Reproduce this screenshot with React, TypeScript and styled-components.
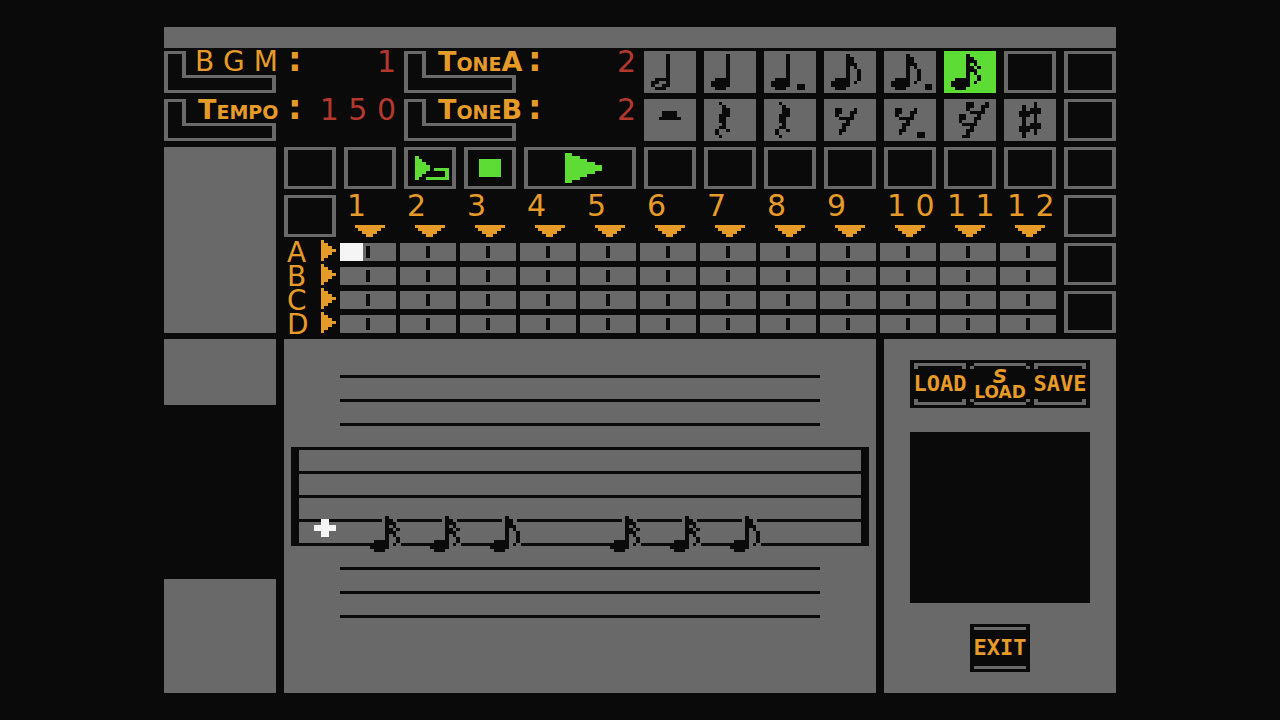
import React from "react";
import styled, { createGlobalStyle } from "styled-components";

const color = {
  ink: "#0a0a0a",
  panel: "#696969",
  amber: "#e69b28",
  red: "#b4382e",
  green: "#5cdc34",
  white: "#f5f5f5",
};

const GlobalStyle = createGlobalStyle`
  *, *::before, *::after { box-sizing: border-box; }
  body {
    margin: 0;
    background: ${color.ink};
    color: ${color.amber};
    font-family: "DejaVu Sans", sans-serif;
  }
  button {
    margin: 0;
    padding: 0;
    border: 0;
    border-radius: 0;
    font: inherit;
    color: inherit;
    cursor: pointer;
  }
`;

/* ---------- sprites ---------- */

// Each entry is [row, firstColumn, lastColumn] on a grid of wide pixels.
type Run = [number, number, number];

const px = (column: number) => Math.floor(column * 3.75);

const column = (c: number, from: number, to: number): Run[] =>
  Array.from({ length: to - from + 1 }, (_, i): Run => [from + i, c, c]);

const head: Run[] = [[9, 3, 5], [10, 2, 5], [11, 2, 5], [12, 3, 5]];
const stem = column(6, 1, 11);
const flag: Run[] = [[2, 7, 7], [3, 7, 7], [4, 7, 8], [5, 8, 8], ...column(9, 6, 9), [10, 8, 8]];
const doubleFlag: Run[] = [
  [2, 7, 7], [3, 7, 8], [4, 8, 8], [5, 7, 7], [5, 9, 9],
  [6, 7, 8], [7, 8, 8], [8, 9, 9], [9, 9, 9], [10, 8, 8],
];
const quarterRest: Run[] = [
  [1, 4, 4], [2, 5, 5], [3, 5, 6], [4, 5, 6], [5, 4, 6], [6, 4, 5],
  [7, 4, 5], [8, 5, 5], [9, 4, 5], [10, 3, 3], [10, 6, 6], [11, 3, 3], [12, 4, 4],
];
const eighthRest: Run[] = [
  [3, 3, 4], [3, 8, 8], [4, 3, 4], [4, 7, 8], [5, 3, 3], [5, 7, 7],
  [6, 4, 7], [7, 6, 6], [8, 5, 6], [9, 5, 5], [10, 4, 5], [11, 4, 4],
];

const sprites: Record<string, Run[]> = {
  half: [...stem, [9, 3, 5], [10, 2, 3], [11, 2, 2], [11, 5, 5], [12, 3, 5]],
  quarter: [...stem, ...head],
  dottedQuarter: [...stem, ...head, [11, 9, 10], [12, 9, 10]],
  eighth: [...stem, ...head, ...flag],
  dottedEighth: [...stem, ...head, ...flag, [11, 11, 12], [12, 11, 12]],
  sixteenth: [...stem, ...head, ...doubleFlag],
  halfRest: [[4, 5, 8], [5, 5, 8], [6, 4, 9]],
  quarterRest,
  eighthRest,
  dottedEighthRest: [...eighthRest, [11, 9, 10], [12, 9, 10]],
  sixteenthRest: [
    [1, 6, 7], [1, 11, 11], [2, 6, 7], [2, 10, 11], [3, 6, 6], [3, 10, 10],
    [4, 7, 10], [5, 4, 5], [5, 9, 9], [6, 4, 5], [6, 8, 9], [7, 4, 4], [7, 8, 8],
    [8, 5, 8], [9, 7, 7], [10, 6, 7], [11, 6, 6], [12, 5, 6],
  ],
  sharp: [
    ...column(5, 2, 12), ...column(8, 1, 11),
    [3, 7, 9], [4, 4, 9], [5, 4, 6], [8, 7, 9], [9, 4, 9], [10, 4, 6],
  ],
  loop: [
    [3, 3, 3], [4, 3, 4], [5, 3, 5], [6, 3, 6], [7, 3, 6], [8, 3, 5], [9, 3, 4], [10, 3, 3],
    [7, 8, 11], [8, 11, 11], [9, 11, 11], [10, 6, 11],
  ],
  stop: [4, 5, 6, 7, 8, 9].map((r): Run => [r, 4, 9]),
  play: [2, 4, 6, 8, 10, 10, 8, 6, 4, 2].map((w, i): Run => [i + 2, 11, 10 + w]),
  down: [[0, 0, 7], [1, 1, 6], [2, 2, 5], [3, 3, 4]],
  right: [1, 2, 3, 4, 3, 2, 1].map((w, i): Run => [i, 0, w - 1]),
  cross: [[0, 2, 3], [1, 2, 3], [2, 0, 5], [3, 0, 5], [4, 2, 3], [5, 2, 3]],
};

const Drawing = styled.svg`
  display: block;
  flex: none;
  fill: currentColor;
  shape-rendering: crispEdges;
`;

function Sprite({ name, width = 52, height = 42 }: { name: string; width?: number; height?: number }) {
  return (
    <Drawing width={width} height={height} viewBox={`0 0 ${width} ${height}`} aria-hidden="true">
      {sprites[name].map(([r, a, b], i) => (
        <rect key={i} x={px(a)} y={r * 3} width={px(b + 1) - px(a)} height={3} />
      ))}
    </Drawing>
  );
}

/* ---------- layout ---------- */

const Editor = styled.main`
  width: min(952px, 100% - 32px);
  margin: 0 auto;
  padding: 27px 0;
`;

const TitleBar = styled.header`
  height: 21px;
  margin-bottom: 3px;
  background: ${color.panel};
`;

const Console = styled.section`
  display: grid;
  grid-template-columns: repeat(16, minmax(0, 1fr));
  grid-auto-rows: 42px;
  gap: 6px 8px;
`;

const Slab = styled.div`
  grid-column: span 2;
  grid-row: 3 / span 4;
  background: ${color.panel};
`;

const Field = styled.label`
  grid-column: span 4;
  display: grid;
  grid-template-columns: 124px 1fr;
  & > * { grid-row: 1; }
`;

const FieldFrame = styled(Drawing)`
  grid-column: 1;
  color: ${color.panel};
`;

const FieldName = styled.span<{ $caps?: boolean }>`
  grid-column: 1;
  padding-left: ${(p) => (p.$caps ? 34 : 31)}px;
  font-size: ${(p) => (p.$caps ? 27 : 28)}px;
  font-weight: ${(p) => (p.$caps ? "bold" : "normal")};
  font-variant: ${(p) => (p.$caps ? "small-caps" : "normal")};
  line-height: 22px;
  white-space: nowrap;
`;

const Reading = styled.span`
  grid-column: 2;
  display: flex;
  justify-content: space-between;
  line-height: 22px;
`;

const Colon = styled.span`
  font-size: 34px;
  font-weight: bold;
  line-height: 16px;
`;

const Value = styled.output`
  color: ${color.red};
  font-size: 30px;
  white-space: nowrap;
`;

const NoteButton = styled.button<{ $active?: boolean }>`
  display: flex;
  justify-content: center;
  background: ${(p) => (p.$active ? color.green : color.panel)};
  color: ${color.ink};
`;

const FrameButton = styled.button<{ $span?: number; $column?: number }>`
  display: flex;
  align-items: center;
  justify-content: center;
  grid-column: ${(p) => (p.$column ? `${p.$column} / ` : "")}span ${(p) => p.$span ?? 1};
  border: solid ${color.panel};
  border-width: 3px 4px;
  background: ${color.ink};
  color: ${color.green};
`;

const Measure = styled.div`
  display: flex;
  flex-direction: column;
  justify-content: space-between;
  align-items: center;
`;

const MeasureNumber = styled.span`
  align-self: stretch;
  padding-left: 3px;
  font-size: 30px;
  line-height: 22px;
  white-space: nowrap;
`;

const Tracks = styled.div`
  grid-column: 3 / span 13;
  grid-row: 5 / span 2;
  display: grid;
  grid-auto-rows: 18px;
  gap: 6px;
`;

const Track = styled.div`
  display: grid;
  grid-template-columns: 52px repeat(12, minmax(0, 1fr));
  gap: 4px;
`;

const TrackName = styled.span`
  display: flex;
  justify-content: space-between;
  align-items: flex-end;
  height: 18px;
  padding-left: 3px;
  font-size: 28px;
  line-height: 16px;
`;

const Beat = styled.button<{ $current?: boolean }>`
  display: grid;
  place-items: center;
  background: ${(p) =>
    p.$current
      ? `linear-gradient(to right, ${color.white} 23px, ${color.panel} 23px)`
      : color.panel};
  &::after {
    content: "";
    width: 4px;
    height: 12px;
    background: ${color.ink};
  }
`;

const Workspace = styled.section`
  display: grid;
  grid-template-columns: minmax(0, 112fr) minmax(0, 592fr) minmax(0, 232fr);
  gap: 8px;
  min-height: 354px;
  margin-top: 6px;
`;

const SideColumn = styled.div`
  display: flex;
  flex-direction: column;
  justify-content: space-between;
`;

const SideBlock = styled.div<{ $height: number }>`
  height: ${(p) => p.$height}px;
  background: ${color.panel};
`;

const Score = styled.div`
  display: flex;
  flex-direction: column;
  gap: 21px;
  padding: 36px 7px;
  background: ${color.panel};
`;

const Lines = styled.div`
  display: flex;
  flex-direction: column;
  gap: 21px;
`;

const LedgerLines = styled(Lines)`
  margin: 0 49px;
`;

const StaffLine = styled.div`
  height: 3px;
  background: ${color.ink};
`;

const Staff = styled(Lines)`
  position: relative;
  border: solid ${color.ink};
  border-width: 0 8px;
`;

const Placed = styled.div<{ $x: number; $y: number }>`
  position: absolute;
  left: ${(p) => p.$x}px;
  top: ${(p) => p.$y}px;
  color: ${color.ink};
`;

const NoteBackdrop = styled(Drawing)`
  position: absolute;
  inset: 0;
  z-index: -1;
  color: ${color.panel};
`;

const PlacedNote = styled(Placed)`
  z-index: 1;
`;

const Cursor = styled(Placed)`
  color: ${color.white};
`;

const Files = styled.aside`
  display: flex;
  flex-direction: column;
  align-items: center;
  padding: 21px 26px;
  background: ${color.panel};
`;

const FileBar = styled.div`
  display: flex;
  justify-content: center;
  width: 100%;
  background: ${color.ink};
`;

const FileButton = styled.button`
  display: grid;
  grid-template-columns: 60px;
  place-items: center;
  height: 48px;
  background: ${color.ink};
  & > * { grid-area: 1 / 1; }
`;

const Bracket = styled(Drawing)`
  color: ${color.panel};
`;

const ActionName = styled.span`
  font-family: "DejaVu Sans Mono", monospace;
  font-size: 22px;
  font-weight: bold;
  line-height: 24px;
`;

const Stacked = styled.span`
  display: flex;
  flex-direction: column;
  align-items: center;
  font-size: 17px;
  font-weight: bold;
  line-height: 16px;
`;

const Slanted = styled.em`
  font-size: 20px;
`;

const FileList = styled.div`
  width: 100%;
  height: 171px;
  margin: 24px 0 21px;
  background: ${color.ink};
`;

/* ---------- parts ---------- */

function Setting({ name, value, caps }: { name: string; value: string; caps?: boolean }) {
  return (
    <Field>
      <FieldFrame width={112} height={42} viewBox="0 0 112 42" aria-hidden="true">
        <path
          fillRule="evenodd"
          d="M0 0H22V24H112V42H0ZM4 3V39H108V27H18V3Z"
        />
      </FieldFrame>
      <FieldName $caps={caps}>{name}</FieldName>
      <Reading>
        <Colon>:</Colon>
        <Value>{value}</Value>
      </Reading>
    </Field>
  );
}

type Corner = "in" | "out" | "none";

const brackets: Record<Corner, string> = {
  in: "M4 3H56V9H52V6H8V9H4ZM4 45H56V39H52V42H8V39H4Z",
  out: "M4 3H56V6H4ZM0 6H4V9H0ZM56 6H60V9H56ZM4 42H56V45H4ZM0 39H4V42H0ZM56 39H60V42H56Z",
  none: "M4 3H56V6H4ZM4 42H56V45H4Z",
};

function FileAction({ corner, children }: { corner: Corner; children: React.ReactNode }) {
  return (
    <FileButton type="button">
      <Bracket width={60} height={48} viewBox="0 0 60 48" aria-hidden="true">
        <path d={brackets[corner]} />
      </Bracket>
      {children}
    </FileButton>
  );
}

function StaffNote({ name, x }: { name: string; x: number }) {
  return (
    <PlacedNote $x={x} $y={66}>
      <NoteBackdrop width={52} height={42} viewBox="0 0 52 42" aria-hidden="true">
        <path d="M19 3H34V12H38V36H19Z" />
      </NoteBackdrop>
      <Sprite name={name} />
    </PlacedNote>
  );
}

const Blank = ({ column: at }: { column?: number }) => (
  <FrameButton type="button" $column={at} aria-label="Empty" />
);

const noteRow = ["half", "quarter", "dottedQuarter", "eighth", "dottedEighth", "sixteenth"];
const restRow = ["halfRest", "quarterRest", "quarterRest", "eighthRest", "dottedEighthRest", "sixteenthRest", "sharp"];
const measures = ["1", "2", "3", "4", "5", "6", "7", "8", "9", "1 0", "1 1", "1 2"];
const melody: [string, number][] = [
  ["sixteenth", 64],
  ["sixteenth", 124],
  ["eighth", 184],
  ["sixteenth", 304],
  ["sixteenth", 364],
  ["eighth", 424],
];

export default function App() {
  return (
    <>
      <GlobalStyle />
      <Editor>
        <TitleBar />
        <Console>
          <Setting name="B G M" value="1" />
          <Setting name="ToneA" value="2" caps />
          {noteRow.map((n) => (
            <NoteButton key={n} type="button" aria-label={n} $active={n === "sixteenth"}>
              <Sprite name={n} />
            </NoteButton>
          ))}
          <Blank />
          <Blank />

          <Setting name="Tempo" value="1 5 0" caps />
          <Setting name="ToneB" value="2" caps />
          {restRow.map((n, i) => (
            <NoteButton key={i} type="button" aria-label={n}>
              <Sprite name={n} />
            </NoteButton>
          ))}
          <Blank />

          <Slab />
          <Blank />
          <Blank />
          <FrameButton type="button" aria-label="Loop">
            <Sprite name="loop" />
          </FrameButton>
          <FrameButton type="button" aria-label="Stop">
            <Sprite name="stop" />
          </FrameButton>
          <FrameButton type="button" aria-label="Play" $span={2}>
            <Sprite name="play" width={112} />
          </FrameButton>
          {Array.from({ length: 8 }, (_, i) => (
            <Blank key={i} />
          ))}

          <Blank column={3} />
          {measures.map((m) => (
            <Measure key={m}>
              <MeasureNumber>{m}</MeasureNumber>
              <Sprite name="down" width={30} height={12} />
            </Measure>
          ))}
          <Blank />

          <Tracks>
            {["A", "B", "C", "D"].map((t) => (
              <Track key={t}>
                <TrackName>
                  {t}
                  <Sprite name="right" width={15} height={21} />
                </TrackName>
                {measures.map((m, i) => (
                  <Beat key={m} type="button" aria-label={`${t} ${m}`} $current={t === "A" && i === 0} />
                ))}
              </Track>
            ))}
          </Tracks>
          <Blank column={16} />
          <Blank column={16} />
        </Console>

        <Workspace>
          <SideColumn>
            <SideBlock $height={66} />
            <SideBlock $height={114} />
          </SideColumn>

          <Score>
            <LedgerLines>
              <StaffLine />
              <StaffLine />
              <StaffLine />
            </LedgerLines>
            <Staff>
              <StaffLine />
              <StaffLine />
              <StaffLine />
              <StaffLine />
              <StaffLine />
              <Cursor $x={15} $y={72}>
                <Sprite name="cross" width={23} height={18} />
              </Cursor>
              {melody.map(([name, x]) => (
                <StaffNote key={x} name={name} x={x} />
              ))}
            </Staff>
            <LedgerLines>
              <StaffLine />
              <StaffLine />
              <StaffLine />
            </LedgerLines>
          </Score>

          <Files>
            <FileBar>
              <FileAction corner="in">
                <ActionName>LOAD</ActionName>
              </FileAction>
              <FileAction corner="out">
                <Stacked>
                  <Slanted>S</Slanted>
                  <span>LOAD</span>
                </Stacked>
              </FileAction>
              <FileAction corner="in">
                <ActionName>SAVE</ActionName>
              </FileAction>
            </FileBar>
            <FileList />
            <FileAction corner="none">
              <ActionName>EXIT</ActionName>
            </FileAction>
          </Files>
        </Workspace>
      </Editor>
    </>
  );
}
